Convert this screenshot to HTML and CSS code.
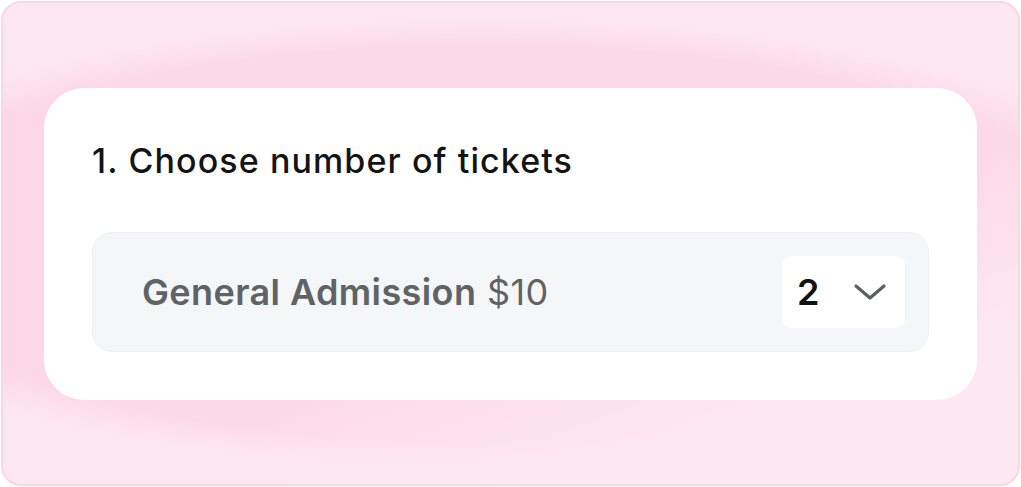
FILE: index.html
```html
<!DOCTYPE html>
<html>
<head>
<meta charset="utf-8">
<link rel="stylesheet" href="styles.css">
</head>
<body>
<div class="frame">
  <div class="card">
    <h1 class="title">1. Choose number of tickets</h1>
    <div class="row">
      <div class="label"><span class="name">General Admission</span> <span class="price">$10</span></div>
      <div class="select">
        <span class="qty">2</span>
        <svg class="chev" width="34" height="20" viewBox="0 0 34 20"><path d="M3 4 L17 16 L31 4" fill="none" stroke="#5b5e68" stroke-width="3.2" stroke-linecap="round" stroke-linejoin="round"/></svg>
      </div>
    </div>
  </div>
</div>
</body>
</html>
```
FILE: styles.css
```css
html, body { margin: 0; padding: 0; }
body { width: 1021px; height: 487px; background: #fff; font-family: "Inter", "Noto Sans", sans-serif; }
.frame {
  box-sizing: border-box;
  margin: 1px;
  width: 1019px;
  height: 485px;
  border: 2px solid #fbd6e5;
  border-radius: 20px;
  background:
    linear-gradient(160deg, rgba(253,233,242,0) 60%, rgba(253,233,242,0.9) 80%),
    radial-gradient(ellipse 720px 225px at 480px 240px, #fdd8e7 0%, #fdd9e8 88%, rgba(253,232,242,0) 100%),
    #fde8f2;
  padding: 85px 41px 84px 41px;
}
.card {
  background: #fff;
  border-radius: 40px;
  height: 312px;
  box-sizing: border-box;
  padding: 53px 48px 0 48px;
}
.title {
  margin: 0;
  font-size: 34px;
  font-weight: 500;
  color: #141414;
  line-height: 40px;
  letter-spacing: 1.1px;
}
.row {
  margin-top: 51px;
  height: 120px;
  box-sizing: border-box;
  background: #f4f6f7;
  border: 1px solid #eef0f1;
  border-radius: 20px;
  display: flex;
  align-items: center;
  justify-content: space-between;
  padding: 0 23px 0 49px;
}
.label { font-size: 36px; color: #5f6366; letter-spacing: 0.4px; }
.name { font-weight: 600; }
.price { font-weight: 400; }
.select {
  width: 123px;
  height: 72px;
  background: #fff;
  border-radius: 9px;
  display: flex;
  align-items: center;
  box-sizing: border-box;
  padding: 0 18px 0 15px;
  justify-content: space-between;
}
.qty { font-size: 36px; font-weight: 600; color: #111; }
.chev { display: block; }
```
